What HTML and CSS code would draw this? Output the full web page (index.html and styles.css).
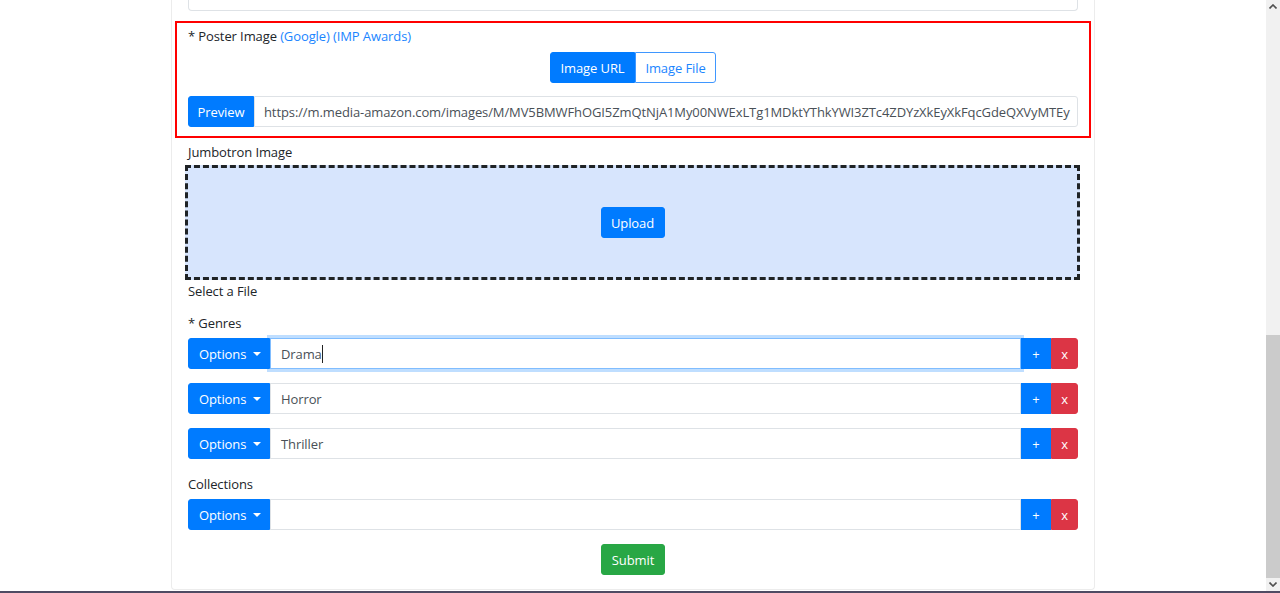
FILE: index.html
```html
<!DOCTYPE html>
<html lang="en">
<head>
<meta charset="utf-8">
<title>Edit Movie</title>
<link rel="stylesheet" href="styles.css">
</head>
<body>
<div class="viewport">
  <main class="stage">
    <section class="card">
      <div class="prev-input"></div>

      <div class="poster-box">
        <div class="field-label">* Poster Image <a class="link" href="#">(Google)</a> <a class="link" href="#">(IMP Awards)</a></div>
        <div class="toggle-row">
          <div class="btn-group">
            <button class="btn btn-primary seg-left w-url">Image URL</button>
            <button class="btn btn-outline seg-right w-file">Image File</button>
          </div>
        </div>
        <div class="input-group">
          <button class="btn btn-primary ig-first w-preview">Preview</button>
          <div class="form-control ig-last url-field">https://m.media-amazon.com/images/M/MV5BMWFhOGI5ZmQtNjA1My00NWExLTg1MDktYThkYWI3ZTc4ZDYzXkEyXkFqcGdeQXVyMTEy</div>
        </div>
      </div>

      <div class="field-label jumbo-label">Jumbotron Image</div>
      <div class="dropzone">
        <button class="btn btn-primary w-small">Upload</button>
      </div>
      <div class="field-label">Select a File</div>

      <div class="field-label genres-label">* Genres</div>
      <div class="input-group list-row">
        <button class="btn btn-primary ig-first dropdown">Options</button>
        <div class="form-control focused">Drama<span class="text-caret"></span></div>
        <button class="btn btn-primary btn-add">+</button>
        <button class="btn btn-danger btn-remove">x</button>
      </div>
      <div class="input-group list-row">
        <button class="btn btn-primary ig-first dropdown">Options</button>
        <div class="form-control">Horror</div>
        <button class="btn btn-primary btn-add">+</button>
        <button class="btn btn-danger btn-remove">x</button>
      </div>
      <div class="input-group list-row">
        <button class="btn btn-primary ig-first dropdown">Options</button>
        <div class="form-control">Thriller</div>
        <button class="btn btn-primary btn-add">+</button>
        <button class="btn btn-danger btn-remove">x</button>
      </div>

      <div class="field-label collections-label">Collections</div>
      <div class="input-group">
        <button class="btn btn-primary ig-first dropdown">Options</button>
        <div class="form-control"></div>
        <button class="btn btn-primary btn-add">+</button>
        <button class="btn btn-danger btn-remove">x</button>
      </div>

      <div class="submit-row">
        <button class="btn btn-success w-small">Submit</button>
      </div>
    </section>
  </main>

  <div class="scrollbar">
    <div class="sb-btn sb-up">
      <svg width="8" height="5" viewBox="0 0 8 5"><path d="M0.5 4.5 L4 1 L7.5 4.5" fill="none" stroke="#505050" stroke-width="1.6"/></svg>
    </div>
    <div class="sb-track"><div class="sb-thumb"></div></div>
    <div class="sb-btn sb-down">
      <svg width="8" height="5" viewBox="0 0 8 5"><path d="M0.5 0.5 L4 4 L7.5 0.5" fill="none" stroke="#505050" stroke-width="1.6"/></svg>
    </div>
  </div>
</div>
<div class="window-edge"></div>
</body>
</html>
```

FILE: styles.css
```css
* { box-sizing: border-box; }

html, body {
  margin: 0;
  height: 593px;
  overflow: hidden;
  background: #ffffff;
  font-family: "Segoe UI", "Open Sans", "Noto Sans", sans-serif;
  font-size: 13px;
  letter-spacing: -0.1px;
  line-height: 21px;
  color: #212529;
}

.viewport {
  display: flex;
  height: 591px;
}

.stage {
  flex: 1;
  display: flex;
  justify-content: center;
  align-items: flex-start;
  overflow: hidden;
}

.card {
  width: 924px;
  border: 1px solid #ececec;
  border-top: 0;
  border-radius: 0 0 4px 4px;
  padding: 0 16px 14px;
}

.prev-input {
  height: 11px;
  border: 1px solid #dee2e6;
  border-top: 0;
  border-radius: 0 0 4px 4px;
}

.poster-box {
  margin: 10px -13px 0;
  border: 2px solid #ff0000;
  padding: 2px 11px 9px;
}

.field-label {
  display: block;
  height: 21px;
  padding-top: 1px;
  line-height: 21px;
  color: #212529;
}

.poster-box .field-label { margin-bottom: 6px; }

.link {
  color: #1a85ff;
  text-decoration: none;
}

.toggle-row {
  display: flex;
  justify-content: center;
  margin-bottom: 13px;
}

.btn-group { display: flex; }

.btn {
  font-family: inherit;
  font-size: 13px;
  letter-spacing: -0.1px;
  line-height: 21px;
  height: 31px;
  padding: 5px 8px 3px;
  border: 1px solid transparent;
  border-radius: 3px;
  cursor: pointer;
  white-space: nowrap;
}

.btn-primary { background: #007bff; border-color: #007bff; color: #ffffff; }
.btn-outline { background: #ffffff; border-color: #3f97ff; color: #1a85ff; }
.btn-danger  { background: #dc3545; border-color: #dc3545; color: #ffffff; }
.btn-success { background: #28a745; border-color: #28a745; color: #ffffff; }

.w-url { width: 85px; }
.w-file { width: 81px; }
.w-preview { width: 66px; }
.w-small { width: 64px; }

.seg-left  { border-radius: 3px 0 0 3px; }
.seg-right { border-radius: 0 3px 3px 0; }

.input-group {
  display: flex;
  height: 31px;
}

.ig-first { border-radius: 3px 0 0 3px; }

.form-control {
  flex: 1;
  min-width: 0;
  height: 31px;
  border: 1px solid #dee2e6;
  padding: 5px 10px 3px;
  color: #495057;
  white-space: nowrap;
  overflow: hidden;
  background: #ffffff;
}

.url-field { padding-left: 9px; }

.ig-last { border-radius: 0 3px 3px 0; }

.form-control.focused {
  border-color: #80bdff;
  box-shadow: 0 0 0 3px rgba(0, 123, 255, 0.25);
}

.text-caret {
  display: inline-block;
  width: 1px;
  height: 18px;
  background: #222;
  vertical-align: -4px;
}

.dropdown {
  width: 82px;
  padding-left: 10px;
  padding-right: 8px;
  text-align: left;
}

.dropdown::after {
  content: "";
  display: inline-block;
  margin-left: 7px;
  vertical-align: 3px;
  border-top: 4.5px solid #ffffff;
  border-left: 4.5px solid transparent;
  border-right: 4.5px solid transparent;
}

.btn-add {
  width: 30px;
  padding-left: 0;
  padding-right: 0;
  border-radius: 0;
  text-align: center;
}

.btn-remove {
  width: 27px;
  padding-left: 0;
  padding-right: 0;
  border-radius: 0 3px 3px 0;
  text-align: center;
}

.jumbo-label { margin-top: 3px; margin-bottom: 3px; }

.dropzone {
  height: 115px;
  margin: 0 -2px 0 -3px;
  border: 3px dashed #1f2326;
  background: #d7e5fd;
  display: flex;
  align-items: center;
  justify-content: center;
}

.genres-label { margin-top: 11px; margin-bottom: 5px; }

.list-row { margin-bottom: 14px; }

.collections-label { margin-top: 0; margin-bottom: 5px; }

.submit-row {
  display: flex;
  justify-content: center;
  margin-top: 14px;
}

.scrollbar {
  width: 14px;
  display: flex;
  flex-direction: column;
  background: #f1f1f1;
}

.sb-btn {
  display: flex;
  align-items: center;
  justify-content: center;
}

.sb-up { height: 13px; }
.sb-down { height: 13px; }

.sb-track {
  flex: 1;
  display: flex;
  flex-direction: column;
  justify-content: flex-end;
}

.sb-thumb {
  height: 243px;
  background: #cbcbcb;
}

.window-edge {
  height: 2px;
  background: #4f4b63;
}
```
